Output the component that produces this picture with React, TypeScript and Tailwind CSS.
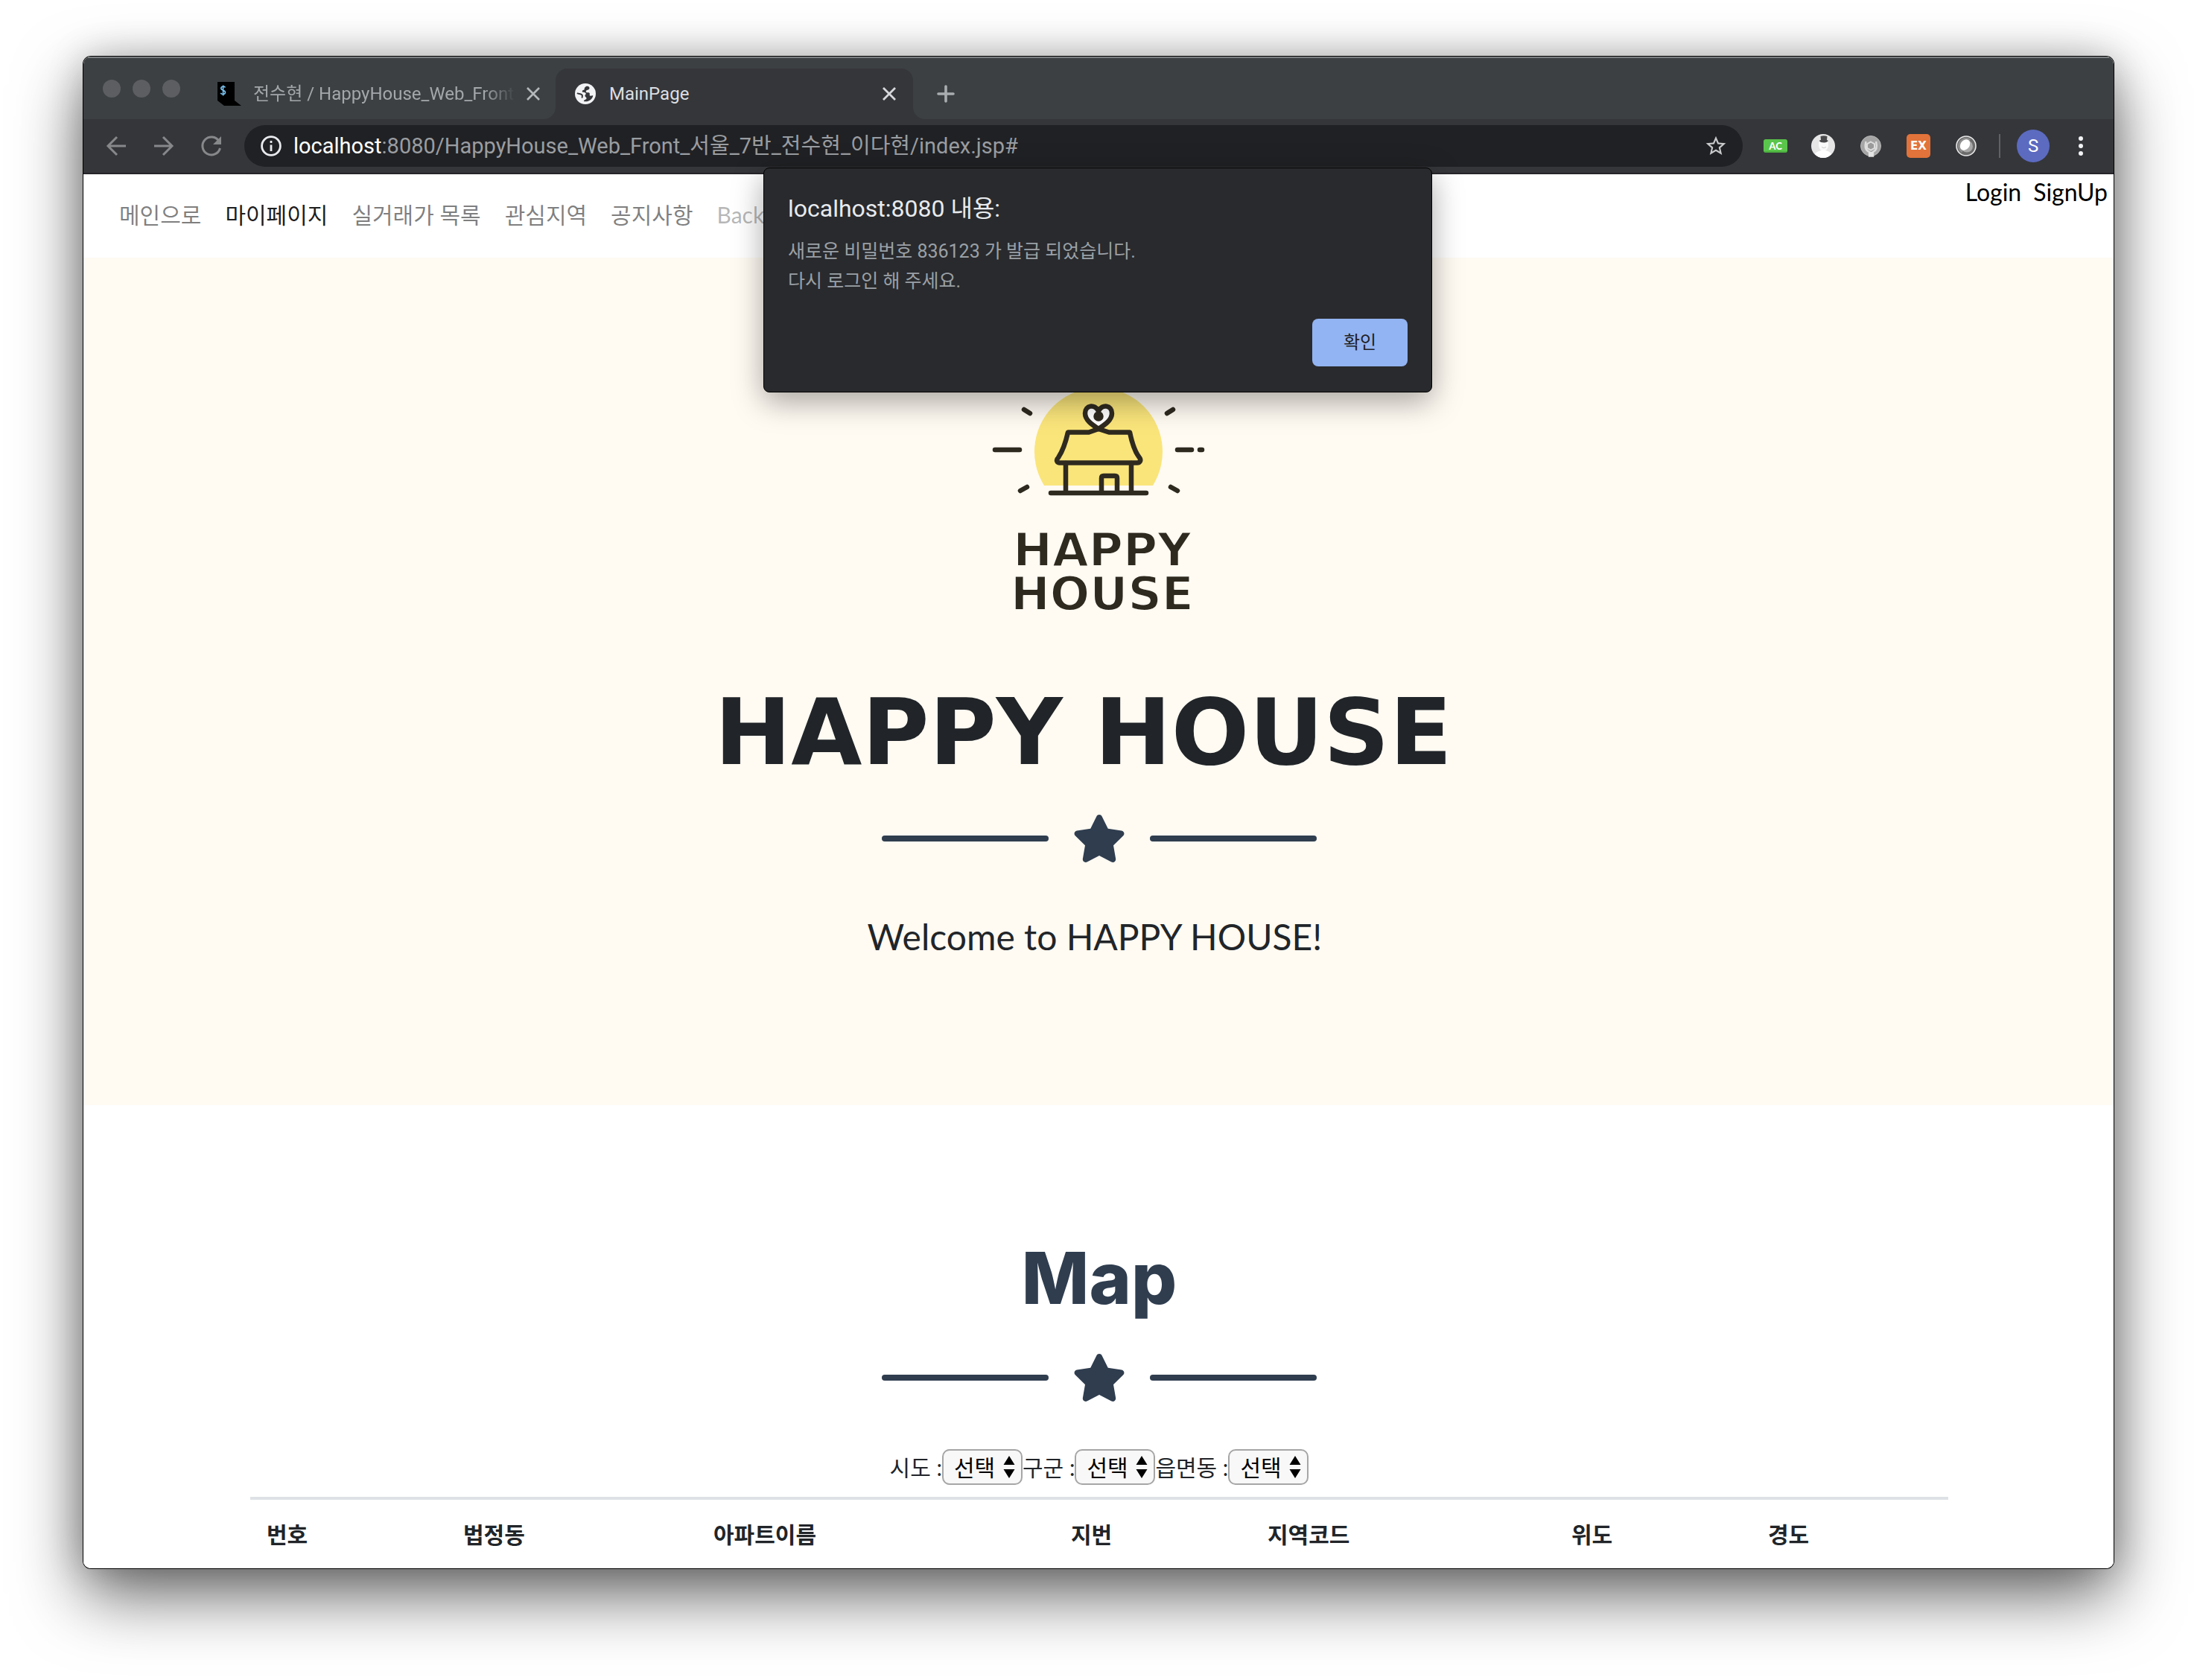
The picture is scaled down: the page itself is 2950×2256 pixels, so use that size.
import React from "react";

const FONT_UI = "font-[Roboto,'Noto_Sans_CJK_KR',sans-serif]";

function Divider() {
  return (
    <div className="flex items-center justify-center gap-8">
      <span className="h-2 w-56 rounded bg-[#2f3d4f]" />
      <svg className="h-16 w-[72px]" viewBox="0 0 576 512" fill="#2f3d4f" aria-hidden="true">
        <path d="M259.3 17.8L194 150.2 47.900 171.500c-26.200 3.800-36.700 36.100-17.700 54.600l105.700 103-25 145.500c-4.500 26.300 23.200 46 46.400 33.700L288 439.600l130.700 68.700c23.200 12.200 50.900-7.400 46.400-33.700l-25-145.500 105.700-103c19-18.500 8.500-50.800-17.700-54.600L382 150.200 316.700 17.800c-11.700-23.600-45.600-23.900-57.400 0z" />
      </svg>
      <span className="h-2 w-56 rounded bg-[#2f3d4f]" />
    </div>
  );
}

function TabStrip() {
  return (
    <div className="flex h-[84px] items-end border-t-2 border-[#7b7f81] bg-[#3c4043] pl-[26px]">
      <div className="mb-[29px] flex gap-4 self-end">
        <span className="size-6 rounded-full bg-[#5d5e61]" />
        <span className="size-6 rounded-full bg-[#5d5e61]" />
        <span className="size-6 rounded-full bg-[#5d5e61]" />
      </div>
      <div className="ml-[50px] flex h-[68px] w-[454px] items-center">
        <svg className="h-8 w-8 shrink-0" viewBox="0 0 32 32" aria-hidden="true">
          <path d="M0 0h23v25l9 7H9l-9-7z" fill="#000" />
          <path d="M10.500 7.500C9.500 5.500 4.800 5.600 4.800 8.600c0 3.300 5.700 2 5.700 5.400 0 3-5 3.300-6.200.8M7.600 4.500v14" fill="none" stroke="#7cc7f5" strokeWidth="1.600" />
        </svg>
        <span className="ml-4 w-[352px] overflow-hidden whitespace-nowrap text-2xl text-[#a4a7aa] [mask-image:linear-gradient(to_right,#000_88%,transparent)]">
          전수현 / HappyHouse_Web_Front
        </span>
        <button aria-label="탭 닫기" className="ml-2 flex size-8 items-center justify-center">
          <svg className="size-5" viewBox="0 0 20 20" stroke="#b5b8bb" strokeWidth="2.600" aria-hidden="true">
            <path d="M2 2l16 16M18 2L2 18" />
          </svg>
        </button>
      </div>
      <div className="relative flex h-[68px] w-[480px] items-center rounded-t-2xl bg-[#35363a] pl-[26px] pr-[16px]">
        <svg className="absolute -left-4 bottom-0 size-4" viewBox="0 0 16 16" fill="#35363a" aria-hidden="true">
          <path d="M16 0v16H0A16 16 0 0 0 16 0z" />
        </svg>
        <svg className="absolute -right-4 bottom-0 size-4" viewBox="0 0 16 16" fill="#35363a" aria-hidden="true">
          <path d="M0 0v16h16A16 16 0 0 1 0 0z" />
        </svg>
        <svg className="size-7" viewBox="0 0 28 28" aria-hidden="true">
          <circle cx="14" cy="14" r="14" fill="#f1f3f4" />
          <path d="M16 3.500c-2 1-3.500 2-3.300 4.200.2 1.600-3 .8-2.900 3.100.1 2 3.600.5 4.700 2.300.9 1.500-1.300 2.200-1 4 .2 1.500 2.200 1.300 2 3.200-.1 1.600-3.500 1.700-3.600 3.700 5.500 1.400 11.300-2 12.400-7.500-1.200-.6-2.700.8-4 .1-1.400-.8.400-2.600-1-3.800-1.200-1-3.200.2-4.300-1.200-1-1.400.6-2.700 2.200-2.900 1.500-.3 2.400-1.400 2.300-2.700-.1-1.300-1.700-2.300-3.500-2.500z" fill="#35363a" />
          <path d="M3 13c2 1.400 5.200.7 6.600 2.600 1 1.400-.6 2.500.3 3.900" fill="none" stroke="#35363a" strokeWidth="2" />
        </svg>
        <span className="ml-[18px] flex-1 text-2xl text-[#dcdee1]">MainPage</span>
        <button aria-label="탭 닫기" className="flex size-8 items-center justify-center">
          <svg className="size-5" viewBox="0 0 20 20" stroke="#d6d8db" strokeWidth="2.800" aria-hidden="true">
            <path d="M2 2l16 16M18 2L2 18" />
          </svg>
        </button>
      </div>
      <button aria-label="새 탭" className="ml-7 flex h-[68px] w-8 items-center justify-center">
        <svg className="size-6" viewBox="0 0 24 24" stroke="#a9adb0" strokeWidth="3.600" strokeLinecap="round" aria-hidden="true">
          <path d="M12 2v20M2 12h20" />
        </svg>
      </button>
    </div>
  );
}

function Toolbar() {
  return (
    <div className="flex h-[74px] items-center border-b-2 border-[#262529] bg-[#35363a] px-7">
      <div className="flex gap-8">
        <button aria-label="뒤로" className="size-8">
          <svg viewBox="0 0 32 32" fill="none" stroke="#86888a" strokeWidth="3" aria-hidden="true">
            <path d="M29 16H5M17 4L5 16l12 12" />
          </svg>
        </button>
        <button aria-label="앞으로" className="size-8">
          <svg viewBox="0 0 32 32" fill="none" stroke="#86888a" strokeWidth="3" aria-hidden="true">
            <path d="M3 16h24M15 4l12 12-12 12" />
          </svg>
        </button>
        <button aria-label="새로고침" className="size-8">
          <svg viewBox="0 0 32 32" fill="none" stroke="#86888a" strokeWidth="3" aria-hidden="true">
            <path d="M26 9.500A12 12 0 1 0 27.500 19" />
            <path d="M29 3v11H18z" fill="#86888a" stroke="none" />
          </svg>
        </button>
      </div>
      <div className="ml-7 flex h-14 flex-1 items-center rounded-full bg-[#202124] pl-[22px] pr-5">
        <svg className="size-7 shrink-0" viewBox="0 0 28 28" fill="none" stroke="#e8eaed" strokeWidth="2.800" aria-hidden="true">
          <circle cx="14" cy="14" r="12.400" />
          <path d="M14 12.500V21M14 7v3" />
        </svg>
        <div role="textbox" aria-label="주소" className="ml-4 flex-1 whitespace-nowrap text-[29px] leading-10 text-[#9a9da1]">
          <span className="text-white">localhost</span>:8080/HappyHouse_Web_Front_서울_7반_전수현_이다현/index.jsp#
        </div>
        <button aria-label="북마크" className="size-8">
          <svg viewBox="0 0 24 24" fill="#c9cacc" aria-hidden="true">
            <path d="M22 9.240l-7.190-.62L12 2 9.190 8.630 2 9.240l5.460 4.730L5.820 21 12 17.270 18.180 21l-1.630-7.030L22 9.240zM12 15.400l-3.760 2.270 1-4.280-3.320-2.880 4.380-.38L12 6.100l1.710 4.040 4.380.38-3.320 2.880 1 4.280L12 15.400z" />
          </svg>
        </button>
      </div>
      <div className="ml-7 flex items-center gap-8">
        <svg className="size-8" viewBox="0 0 32 32" aria-hidden="true">
          <rect y="7" width="32" height="18" rx="3" fill="#5ac54b" />
          <path d="M1 24h30" stroke="#3f9a35" strokeWidth="1" />
          <text x="16" y="20.500" textAnchor="middle" fontSize="13" fontWeight="900" fill="#fff" fontFamily="Lato">AC</text>
        </svg>
        <svg className="size-8" viewBox="0 0 32 32" aria-hidden="true">
          <circle cx="16" cy="16" r="16" fill="#e6e6e6" />
          <path d="M10 11h13v5q-1 5-4 6v3h-5v-3q-3-1-4-6z" fill="#fafafa" />
          <path d="M5 27q2-4 9-5h5q6 1 8 5-4 5-11 5T5 27z" fill="#fff" />
          <path d="M12.500 3q4.500-1.500 9 0l-.5 5q2 0 1.500 1.500Q20 12 17 11.500 12 11.500 11 9q0-1 2-1z" fill="#4a4a4c" />
          <path d="M14 17.500q3 2.500 6 0" stroke="#ccc" fill="none" />
        </svg>
        <svg className="size-8" viewBox="0 0 32 32" aria-hidden="true">
          <circle cx="16" cy="16" r="13.500" fill="#a5a5a5" stroke="#b8b8b8" />
          <path d="M9.500 10q-3 11 4.500 14v5.500h5V24q7-3 4-14" fill="none" stroke="#dedede" strokeWidth="2.400" />
          <path d="M13 24h6v5.500h-6z" fill="#e4e4e4" />
          <path d="M16 10.500l5 2.800v5.600l-5 2.800-5-2.800v-5.600z" fill="#9a9a9a" stroke="#dedede" strokeWidth="2" />
        </svg>
        <svg className="size-8" viewBox="0 0 32 32" aria-hidden="true">
          <rect width="32" height="32" rx="5" fill="#e2733a" />
          <text x="16" y="21" textAnchor="middle" fontSize="15" fontWeight="700" fill="#fff" fontFamily="DejaVu Sans">EX</text>
        </svg>
        <svg className="size-8" viewBox="0 0 32 32" aria-hidden="true">
          <circle cx="16" cy="16" r="13" fill="#6b6b6b" stroke="#e8e8e8" strokeWidth="1.600" />
          <path d="M5 16A11 11 0 0 1 22 7L10 25q-5-4-5-9z" fill="#8f8f8f" />
          <circle cx="17" cy="16.500" r="8" fill="#a8a8a8" />
          <ellipse cx="14.500" cy="14.500" rx="6" ry="7.800" transform="rotate(38 14.500 14.500)" fill="#fff" />
        </svg>
      </div>
      <span className="ml-7 h-8 w-[2px] bg-[#5f6164]" />
      <button className="ml-[22px] flex size-11 items-center justify-center rounded-full bg-[#5c6bc0] text-2xl text-white">S</button>
      <button aria-label="메뉴" className="ml-[26px] flex size-8 flex-col items-center justify-between py-[3px]">
        <span className="size-[6px] rounded-full bg-[#f1f3f4]" />
        <span className="size-[6px] rounded-full bg-[#f1f3f4]" />
        <span className="size-[6px] rounded-full bg-[#f1f3f4]" />
      </button>
    </div>
  );
}

function AlertDialog() {
  return (
    <div
      role="alertdialog"
      aria-labelledby="alert-title"
      className={`absolute left-1/2 top-[149px] h-[302px] w-[898px] -translate-x-[450px] rounded-lg border border-black bg-[#292a2d] px-8 pt-[34px] shadow-[0_12px_40px_rgba(0,0,0,0.35)] ${FONT_UI}`}
    >
      <h2 id="alert-title" className="text-[32px] leading-10 text-[#e8eaed]">localhost:8080 내용:</h2>
      <p className="mt-[18px] text-[25px] leading-10 text-[#9aa0a6]">
        새로운 비밀번호 836123 가 발급 되었습니다.
        <br />
        다시 로그인 해 주세요.
      </p>
      <div className="mt-[30px] flex justify-end">
        <button className="h-16 w-32 rounded-lg bg-[#92b4f2] text-2xl text-[#202124]">확인</button>
      </div>
    </div>
  );
}

const NAV = [
  { label: "메인으로", tone: "text-black/50" },
  { label: "마이페이지", tone: "text-black/90" },
  { label: "실거래가 목록", tone: "text-black/50" },
  { label: "관심지역", tone: "text-black/50" },
  { label: "공지사항", tone: "text-black/50" },
  { label: "Back", tone: "text-black/30" },
];

function SiteNav() {
  return (
    <header className="flex h-28 items-start justify-between bg-white pl-8 pr-2">
      <nav className="flex pt-[34px] text-[30px] leading-10">
        {NAV.map((n) => (
          <a key={n.label} href="#" className={`px-4 ${n.tone}`}>{n.label}</a>
        ))}
      </nav>
      <div className="flex gap-4 pt-[2px] text-[32px] leading-[44px] text-black">
        <a href="#">Login</a>
        <a href="#">SignUp</a>
      </div>
    </header>
  );
}

function Logo() {
  return (
    <svg className="h-[350px] w-[350px]" viewBox="0 0 350 350" role="img" aria-label="Happy House">
      <path d="M101 152A86 86 0 1 1 247 152z" fill="#fae57b" />
      <g fill="none" stroke="#2f2a20" strokeWidth="6.500" strokeLinecap="round" strokeLinejoin="round">
        <path d="M174 76C165 70 156 64 156 55c0-11 13-13 18-3 5-10 18-8 18 3 0 9-9 15-18 21z" fill="#fff" />
        <circle cx="174" cy="59" r="3.500" fill="#2f2a20" />
        <path d="M174 76l-13 4.500h-28q-5 22-13 34c-4 4-1 7 2 7h104c3 0 6-3 3-7q-8-10-13-34h-28z" />
        <path d="M130 122v39M218 122v39M110 162h128M178 160v-18q0-3 3-3h15q3 0 3 3v18" />
        <path d="M35 104h33M280 104h19M310 104h3M74 50l8 5M274 50l-8 5M69 159l9-5M271 154l9 5" />
      </g>
      <g fill="#2f2a20" stroke="#fffaf2" strokeWidth="2" strokeLinejoin="round" fontFamily="DejaVu Sans" fontWeight="700" fontSize="63" textAnchor="middle">
        <text x="179" y="260">HAPPY</text>
        <text x="179" y="319">HOUSE</text>
      </g>
    </svg>
  );
}

const COLUMNS = ["번호", "법정동", "아파트이름", "지번", "지역코드", "위도", "경도"];

function Select({ id, label }: { id: string; label: string }) {
  return (
    <>
      <label htmlFor={id}>{label}</label>
      <span className="relative flex">
        <select id={id} className="h-12 w-[108px] appearance-none rounded-[10px] border-2 border-[#a6a6a6] bg-[#f8f8f8] pl-[14px] text-[30px] leading-10 text-black">
          <option>선택</option>
        </select>
        <svg className="pointer-events-none absolute right-[10px] top-2 h-8 w-4" viewBox="0 0 16 32" aria-hidden="true">
          <path d="M8 1l7.500 12H.5zM8 31l7.500-12H.5z" />
        </svg>
      </span>
    </>
  );
}

export default function App() {
  return (
    <div className="min-h-screen bg-white px-28 pb-[146px] pt-[76px]">
      <div className="relative rounded-[10px] shadow-[0_0_0_1px_#000,0_36px_90px_rgba(0,0,0,0.6),0_0_50px_rgba(0,0,0,0.2)]">
        <div className="overflow-hidden rounded-[10px] bg-white">
          <div className={FONT_UI}>
            <TabStrip />
            <Toolbar />
          </div>
          <div className="font-[Lato,'Noto_Sans_CJK_KR',sans-serif] text-[#212529]">
            <SiteNav />
            <section className="flex flex-col items-center bg-[#fffaf2] pb-[190px] pl-[2px] pt-[154px]">
              <Logo />
              <h1 className="mt-[54px] font-['DejaVu_Sans',sans-serif] text-[123px] font-bold leading-[160px] text-[#212529]">HAPPY HOUSE&nbsp;</h1>
              <div className="mt-[30px]"><Divider /></div>
              <p className="mt-[64px] text-5xl leading-[72px]">Welcome to HAPPY HOUSE!&nbsp;</p>
            </section>
            <section className="flex flex-col items-center bg-white pl-56 pr-[222px] pt-[172px]">
              <h2 className="font-[Inter,sans-serif] text-[96px] font-extrabold leading-[120px] text-[#2f3d4f]">Map</h2>
              <div className="mt-[42px]"><Divider /></div>
              <div className="mt-[64px] flex items-center text-[30px] leading-[48px]">
                <Select id="sido" label="시도 :" />
                <Select id="gugun" label="구군 :" />
                <Select id="dong" label="읍면동 :" />
              </div>
              <table className="mt-4 w-full border-t-4 border-[#dee2e6]">
                <thead>
                  <tr>
                    {COLUMNS.map((c) => (
                      <th key={c} className="py-6 pl-[22px] pr-6 text-left text-[30px] font-bold leading-[44px]">{c}</th>
                    ))}
                  </tr>
                </thead>
              </table>
            </section>
          </div>
        </div>
        <AlertDialog />
      </div>
    </div>
  );
}
